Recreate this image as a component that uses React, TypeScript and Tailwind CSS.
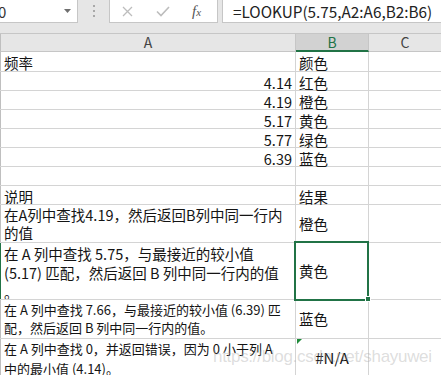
import type { ReactNode } from "react";

const grid = "border-[#d4d4d4]";

function Row({
  h,
  a,
  b,
  aClass = "",
  bClass = "",
  leftGreen = false,
  extra,
}: {
  h: string;
  a?: ReactNode;
  b?: ReactNode;
  aClass?: string;
  bClass?: string;
  leftGreen?: boolean;
  extra?: ReactNode;
}) {
  return (
    <div className={`flex shrink-0 border-b ${grid} ${h}`}>
      <div
        className={`w-[296px] shrink-0 border-l border-r ${grid} ${
          leftGreen ? "border-l-[#217346]" : "border-l-[#bfbfbf]"
        } px-[3px] overflow-hidden ${aClass}`}
      >
        {a}
      </div>
      <div className={`relative w-[73px] shrink-0 border-r ${grid} px-[3px] ${bClass}`}>
        {extra}
        {b}
      </div>
      <div className="flex-1" />
    </div>
  );
}

const single = "flex items-start text-[14.5px] leading-[15px] pt-[3px]";

export default function App() {
  const data = [
    ["4.14", "红色"],
    ["4.19", "橙色"],
    ["5.17", "黄色"],
    ["5.77", "绿色"],
    ["6.39", "蓝色"],
  ];

  return (
    <div className="relative w-[441px] h-[375px] overflow-hidden bg-white font-['Noto_Sans_CJK_SC','Noto_Sans',sans-serif] text-[#141414] flex flex-col">
      {/* formula bar */}
      <div className="flex h-[24px] shrink-0 bg-[#e6e6e6]">
        <div className="flex h-[23px] w-[78px] items-center justify-between border-r border-b border-[#c6c6c6] bg-white pr-[6px]">
          <span className="-ml-[2px] text-[15px] leading-none text-[#333]">0</span>
          <svg width="7" height="4" viewBox="0 0 7 4">
            <polygon points="0,0 7,0 3.5,4" fill="#6f6f6f" />
          </svg>
        </div>
        <div className="flex w-[31px] flex-col items-center justify-center gap-[3px] pb-[2px]">
          <div className="h-[2px] w-[2px] bg-[#a8a8a8]" />
          <div className="h-[2px] w-[2px] bg-[#a8a8a8]" />
          <div className="h-[2px] w-[2px] bg-[#a8a8a8]" />
        </div>
        <div className="flex h-[23px] w-[109px] items-center border-x border-b border-[#c6c6c6] bg-white">
          <svg className="ml-[12px]" width="11" height="11" viewBox="0 0 11 11">
            <path d="M1 1 L10 10 M10 1 L1 10" stroke="#bdbdbd" strokeWidth="1.3" fill="none" />
          </svg>
          <svg className="ml-[23px]" width="14" height="11" viewBox="0 0 14 11">
            <path d="M1 5.5 L5 9.5 L13 1" stroke="#bdbdbd" strokeWidth="1.6" fill="none" />
          </svg>
          <span className="ml-[22px] font-['Liberation_Serif',serif] italic text-[15px] leading-none text-[#555]">
            f<span className="text-[11px]">x</span>
          </span>
        </div>
        <div className="w-[4px]" />
        <div className="flex h-[23px] flex-1 items-center border-l border-b border-[#c6c6c6] bg-white pl-[10px] text-[15.3px] text-[#222]">
          =LOOKUP(5.75,A2:A6,B2:B6)
        </div>
      </div>

      <div className="h-[9px] shrink-0 bg-[#e6e6e6]" />

      {/* column headers */}
      <div className="flex h-[19px] shrink-0 border-t border-[#c6c6c6] bg-[#e6e6e6] text-[14px] leading-[17px]">
        <div className="flex w-[296px] shrink-0 justify-center border-l border-r border-b border-[#c6c6c6] border-l-[#bfbfbf] text-[#444]">
          A
        </div>
        <div className="flex w-[73px] shrink-0 justify-center border-r border-b-2 border-r-[#c6c6c6] border-b-[#217346] bg-[#d2d2d2] text-[#217346]">
          B
        </div>
        <div className="flex flex-1 justify-center border-b border-[#c6c6c6] text-[#444]">C</div>
      </div>

      <Row h="h-[20px]" a="频率" b="颜色" aClass={single} bClass={single} />
      {data.map(([n, c]) => (
        <Row key={n} h="h-[19px]" a={n} b={c} aClass={`${single} justify-end`} bClass={single} />
      ))}
      <Row h="h-[19px]" />
      <Row h="h-[19px]" a="说明" b="结果" aClass={single} bClass={single} />

      <Row
        h="h-[38px]"
        aClass="text-[14.5px] leading-[17.5px] pt-[1px] whitespace-nowrap"
        a={
          <>
            <div>在A列中查找4.19，然后返回B列中同一行内</div>
            <div>的值</div>
          </>
        }
        bClass="flex items-center text-[14.5px]"
        b="橙色"
      />
      <Row
        h="h-[57px]"
        leftGreen
        aClass="text-[14.5px] leading-[19px] pt-[1px] whitespace-nowrap"
        a={
          <>
            <div>在 A 列中查找 5.75，与最接近的较小值</div>
            <div>(5.17) 匹配，然后返回 B 列中同一行内的值</div>
            <div>。</div>
          </>
        }
        bClass="flex items-center text-[14.5px]"
        b="黄色"
      />
      <Row
        h="h-[39px]"
        aClass="text-[13px] leading-[18px] pt-[1px] whitespace-nowrap"
        a={
          <>
            <div>在 A 列中查找 7.66，与最接近的较小值 (6.39) 匹</div>
            <div>配，然后返回 B 列中同一行内的值。</div>
          </>
        }
        bClass="flex items-center text-[14.5px]"
        b="蓝色"
      />
      <Row
        h="flex-1"
        aClass="text-[13px] leading-[20px] whitespace-nowrap"
        a={
          <>
            <div>在 A 列中查找 0，并返回错误，因为 0 小于列 A</div>
            <div>中的最小值 (4.14)。</div>
          </>
        }
        bClass="flex items-center justify-center text-[15px] pb-[1px]"
        b="#N/A"
        extra={
          <svg className="absolute left-[1px] top-0" width="5" height="5" viewBox="0 0 5 5">
            <polygon points="0,0 5,0 0,5" fill="#1f8a3a" />
          </svg>
        }
      />

      {/* selected cell B10 */}
      <div className="absolute left-[294px] top-[241px] h-[60px] w-[75px] border-2 border-[#217346]" />
      <div className="absolute left-[365px] top-[296px] h-[6px] w-[6px] border border-white bg-[#217346]" />

      {/* watermark */}
      <div className="pointer-events-none absolute left-[213px] top-[346px] font-['Liberation_Sans',sans-serif] text-[17px] leading-[22px] tracking-[-0.3px] text-[rgba(170,170,170,0.4)]">
        https://blog.csdn.net/shayuwei
      </div>
    </div>
  );
}
